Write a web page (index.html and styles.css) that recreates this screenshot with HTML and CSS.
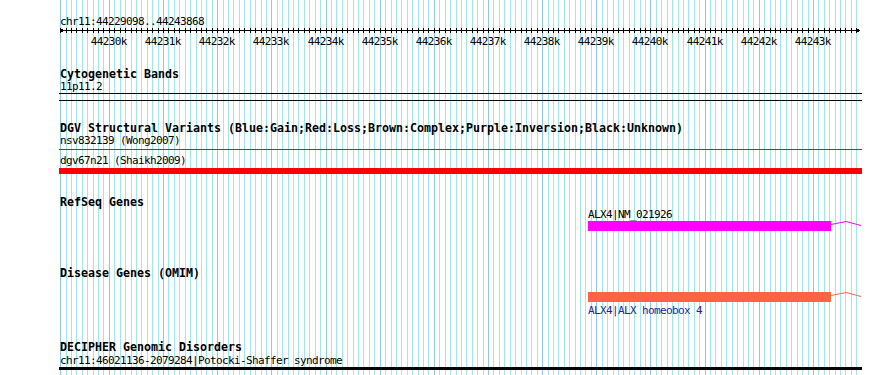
FILE: index.html
```html
<!DOCTYPE html>
<html lang="en">
<head>
    <meta charset="UTF-8" />
    <meta name="viewport" content="width=device-width, initial-scale=1.0"/>
    <title>chr11:44229098..44243868</title>
    <link rel="stylesheet" href="styles.css">
</head>
<body>
<main class="panel">
    <svg class="grid" id="grid" width="803" height="375"></svg>

    <section class="ruler">
        <div class="label">chr11:44229098..44243868</div>
        <svg class="scale" id="scale" width="803" height="20"></svg>
    </section>

    <section class="track cyto">
        <div class="track-title">Cytogenetic Bands</div>
        <div class="label">11p11.2</div>
        <div class="band"></div>
    </section>

    <section class="track dgv">
        <div class="track-title">DGV Structural Variants (Blue:Gain;Red:Loss;Brown:Complex;Purple:Inversion;Black:Unknown)</div>
        <div class="label">nsv832139 (Wong2007)</div>
        <div class="line-thin"></div>
        <div class="label second">dgv67n21 (Shaikh2009)</div>
        <div class="bar-loss"></div>
    </section>

    <section class="track refseq">
        <div class="track-title">RefSeq Genes</div>
        <div class="feature" style="margin-left:529px; width:243px">
            <div class="label">ALX4|NM_021926</div>
            <div class="exon exon-refseq">
                <svg class="intron" width="30" height="10"><polyline points="0,3.5 15,0.5 30,4.5"/></svg>
            </div>
        </div>
    </section>

    <section class="track omim">
        <div class="track-title">Disease Genes (OMIM)</div>
        <div class="feature" style="margin-left:529px; width:243px">
            <div class="exon exon-omim">
                <svg class="intron" width="30" height="10"><polyline points="0,3.5 15,0.5 30,4.5"/></svg>
            </div>
            <div class="label label-link">ALX4|ALX homeobox 4</div>
        </div>
    </section>

    <section class="track decipher">
        <div class="track-title">DECIPHER Genomic Disorders</div>
        <div class="label">chr11:46021136-2079284|Potocki-Shaffer syndrome</div>
        <div class="bar-region"></div>
    </section>
</main>

<script>
    // view range of the panel
    const START = 44229098;
    const END = 44243868;
    const PX_PER_BP = 800 / (END - START);
    const SVG_NS = 'http://www.w3.org/2000/svg';

    function bpToX(bp) {
        return Math.round(1 + (bp - START) * PX_PER_BP);
    }

    function addLine(svg, x1, y1, x2, y2, cls) {
        const line = document.createElementNS(SVG_NS, 'line');
        line.setAttribute('x1', x1);
        line.setAttribute('y1', y1);
        line.setAttribute('x2', x2);
        line.setAttribute('y2', y2);
        line.setAttribute('class', cls);
        svg.appendChild(line);
    }

    const grid = document.getElementById('grid');
    const scale = document.getElementById('scale');
    const first = Math.ceil(START / 100) * 100;

    // grid lines and ruler ticks every 100bp
    for (let bp = first; bp < END; bp += 100) {
        const x = bpToX(bp) + 0.5;
        const major = bp % 1000 === 0;
        addLine(grid, x, 0, x, 375, major || bp === first ? 'grid-major' : 'grid-minor');
        addLine(scale, x, 0, x, 5, 'tick');

        if (major) {
            const text = document.createElementNS(SVG_NS, 'text');
            text.setAttribute('x', x - 0.7);
            text.setAttribute('y', 17);
            text.setAttribute('class', 'tick-label');
            text.textContent = (bp / 1000) + 'k';
            scale.appendChild(text);
        }
    }

    // the scale line with arrows at both ends
    addLine(scale, 1, 2.5, 801, 2.5, 'tick');
    const arrows = document.createElementNS(SVG_NS, 'path');
    arrows.setAttribute('d', 'M4.5,0.5 L1.5,2.5 L4.5,4.5 M797.5,0.5 L800.5,2.5 L797.5,4.5');
    arrows.setAttribute('class', 'arrow');
    scale.appendChild(arrows);
</script>
</body>
</html>
```

FILE: styles.css
```css
body {
    margin: 0;
    padding: 0;
    background-color: white;
    color: black;
    font-family: 'DejaVu Sans Mono', monospace;
    font-size: 11px;
    letter-spacing: -0.62px;
    width: 890px;
    height: 375px;
    overflow: hidden;
}

.panel {
    position: relative;
    z-index: 0;
    margin-left: 59px;
    width: 803px;
    height: 375px;
}

.grid {
    position: absolute;
    top: 0;
    left: 0;
    z-index: -1;
    shape-rendering: crispEdges;
}

.grid-minor {
    stroke: #a0e6ee;
    stroke-width: 1;
}

.grid-major {
    stroke: #8ec6ee;
    stroke-width: 1;
}

.ruler {
    padding-top: 15px;
}

.ruler .label {
    line-height: 13px;
}

.scale {
    display: block;
    shape-rendering: crispEdges;
}

.tick {
    stroke: black;
    stroke-width: 1;
}

.arrow {
    fill: none;
    stroke: black;
    stroke-width: 1;
}

.tick-label {
    font-family: 'DejaVu Sans Mono', monospace;
    font-size: 11px;
    text-anchor: middle;
    fill: black;
}

.track-title {
    font-size: 11.63px;
    font-weight: bold;
    letter-spacing: 0;
    line-height: 14px;
    padding-left: 1px;
    white-space: nowrap;
}

.label {
    position: relative;
    z-index: 1;
    line-height: 11px;
    padding-left: 1px;
    white-space: nowrap;
}

.label-link {
    color: #1626a4;
    margin-top: 3px;
    padding-left: 0;
}

.feature .label {
    padding-left: 0;
}

/* track spacing */
.cyto {
    margin-top: 19px;
}

.dgv {
    margin-top: 20px;
}

.refseq {
    margin-top: 21px;
}

.omim {
    margin-top: 35px;
}

.decipher {
    margin-top: 24px;
}

.band {
    margin-top: 1px;
    height: 6px;
    border-top: 1px solid black;
    border-bottom: 1px solid black;
}

.line-thin {
    margin-top: 3px;
    height: 1px;
    background-color: #ff0000;
}

.dgv .second {
    margin-top: 5px;
}

.bar-loss {
    margin-top: 2px;
    height: 6px;
    background-color: #ff0000;
}

.exon {
    position: relative;
    height: 10px;
}

.exon-refseq {
    margin-top: 1px;
    background-color: #ff00ff;
}

.exon-refseq .intron polyline {
    stroke: #ff00ff;
}

.omim .exon {
    margin-top: 12px;
}

.exon-omim {
    background-color: #ff6347;
}

.exon-omim .intron polyline {
    stroke: #ff6347;
}

.intron {
    position: absolute;
    top: 0;
    left: 100%;
}

.intron polyline {
    fill: none;
    stroke-width: 1;
}

.decipher .label {
    margin-top: 1px;
}

.bar-region {
    margin-top: 1px;
    height: 3px;
    background-color: black;
}
```
